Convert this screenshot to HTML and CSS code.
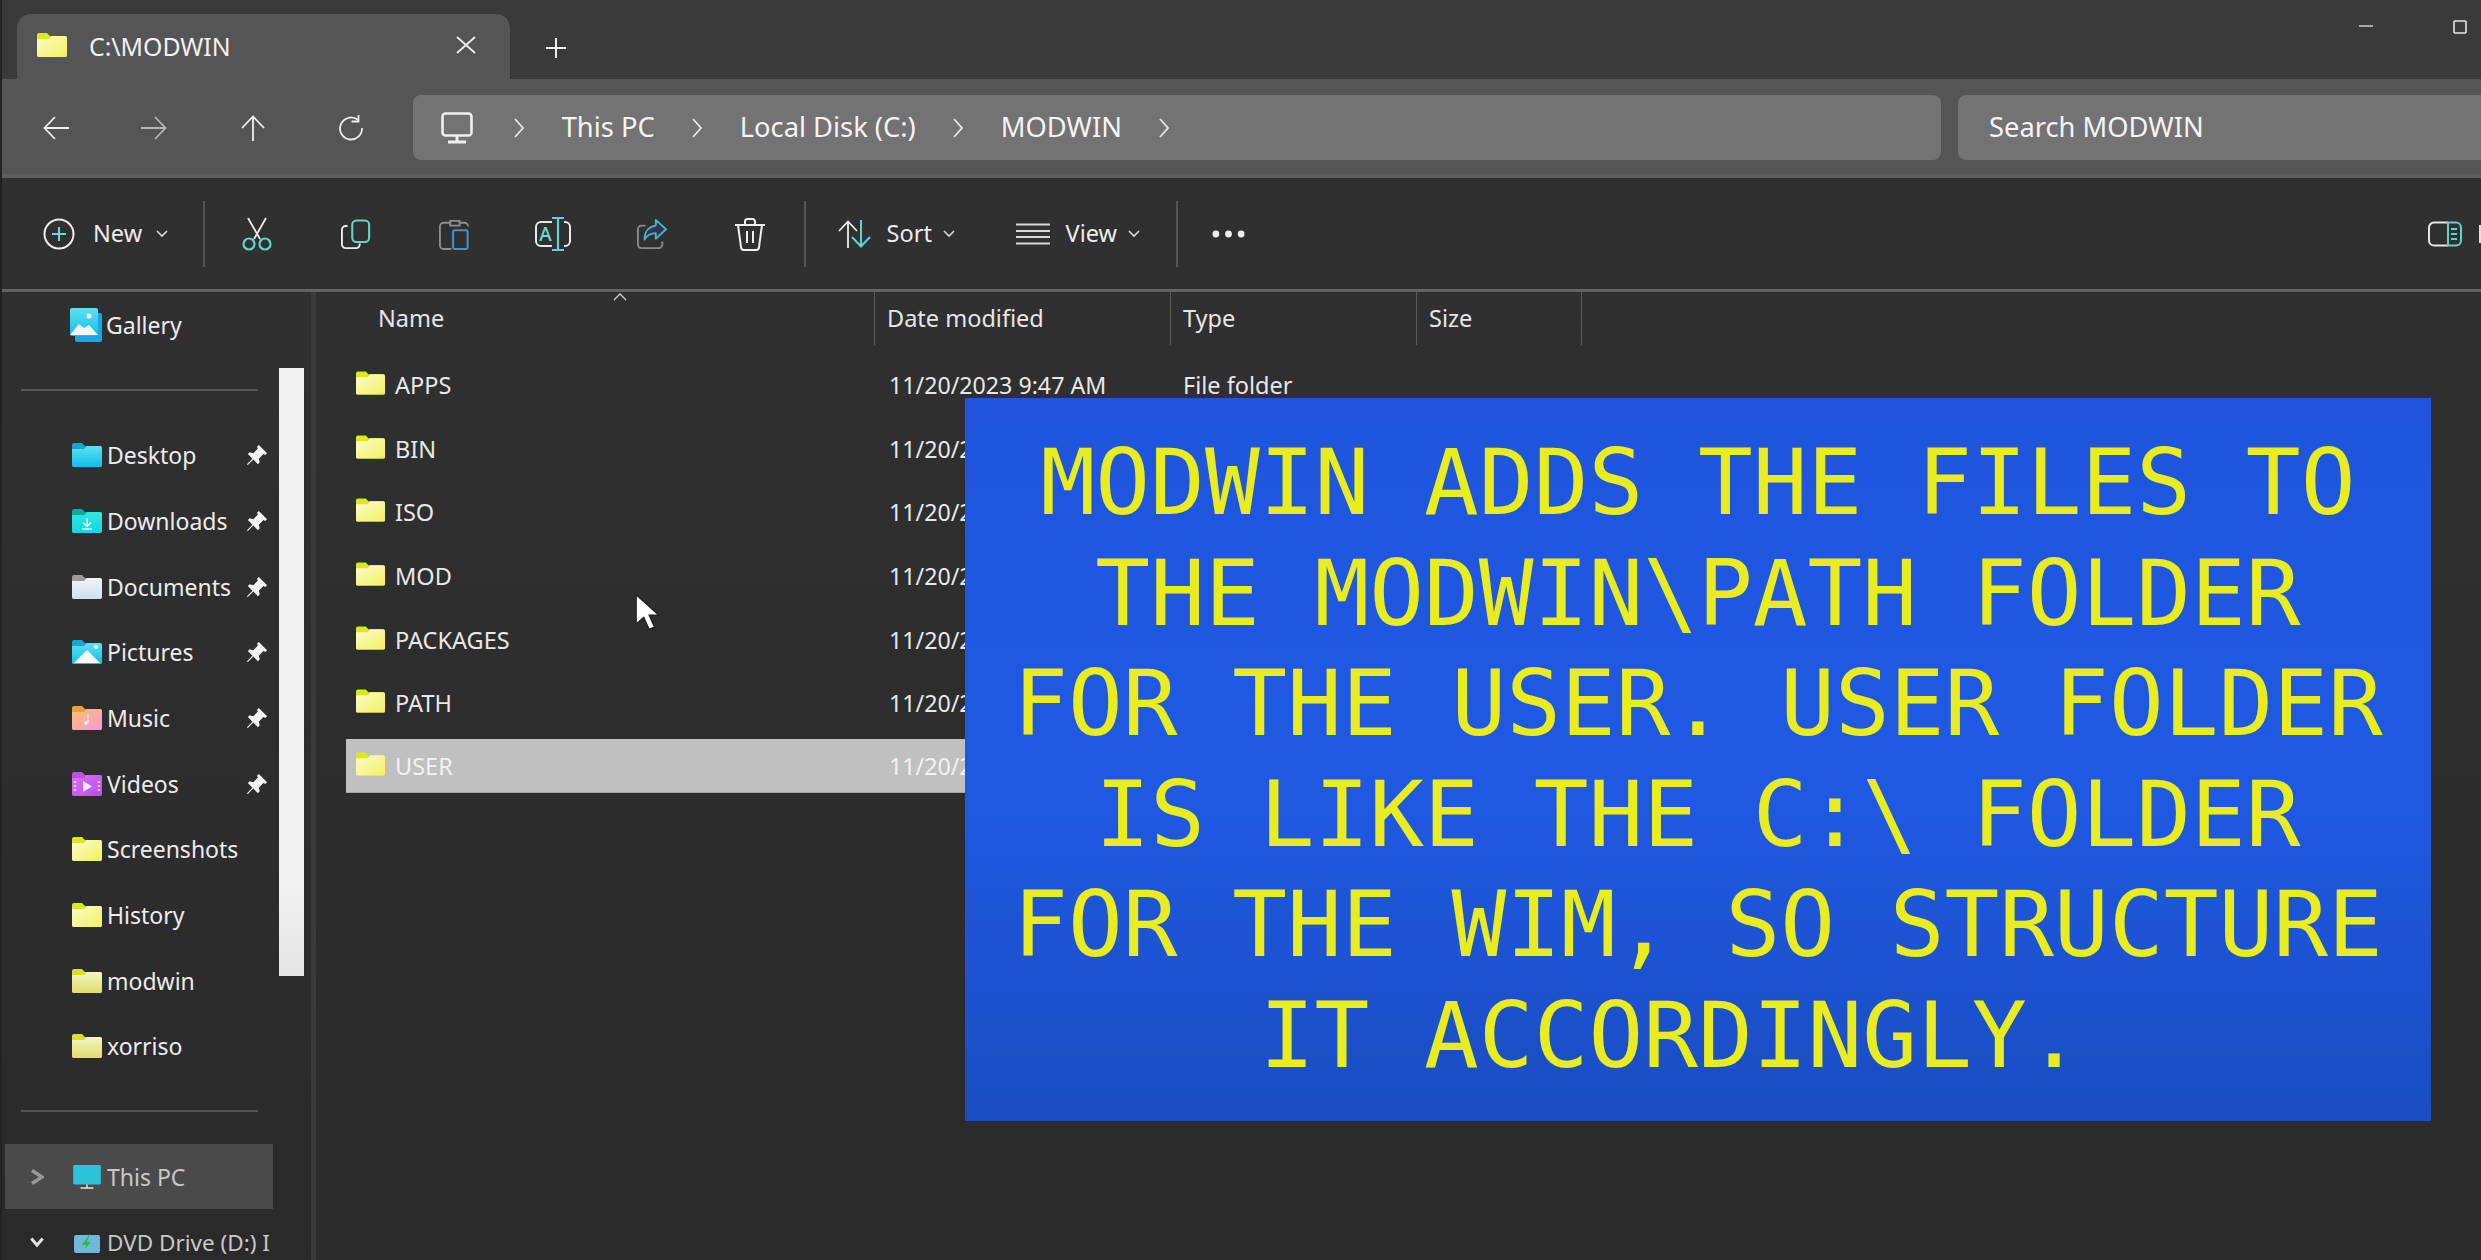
FILE: index.html
```html
<!DOCTYPE html>
<html lang="en">
<head>
<meta charset="utf-8">
<title>C:\MODWIN</title>
<link rel="stylesheet" href="styles.css">
</head>
<body>
<svg class="defs" width="0" height="0" aria-hidden="true">
  <defs>
    <linearGradient id="gy" x1="0" y1="0" x2="1" y2="1"><stop offset="0" stop-color="#fbfbd0"/><stop offset="1" stop-color="#f2f25c"/></linearGradient>
    <linearGradient id="gm" x1="0" y1="0" x2="0" y2="1"><stop offset="0" stop-color="#f4f4c4"/><stop offset="1" stop-color="#dede6c"/></linearGradient>
    <linearGradient id="gc" x1="0" y1="0" x2="0" y2="1"><stop offset="0" stop-color="#5fe0f4"/><stop offset="1" stop-color="#10c0e8"/></linearGradient>
    <linearGradient id="gt" x1="0" y1="0" x2="0" y2="1"><stop offset="0" stop-color="#30e8e0"/><stop offset="1" stop-color="#12d6e0"/></linearGradient>
    <linearGradient id="gw" x1="0" y1="0" x2="0" y2="1"><stop offset="0" stop-color="#f4f4f4"/><stop offset="1" stop-color="#cfe0f0"/></linearGradient>
    <linearGradient id="go" x1="0" y1="0" x2="1" y2="1"><stop offset="0" stop-color="#fbc070"/><stop offset="1" stop-color="#f898d8"/></linearGradient>
    <linearGradient id="gv" x1="0" y1="0" x2="1" y2="1"><stop offset="0" stop-color="#e070f0"/><stop offset="1" stop-color="#b050f0"/></linearGradient>
    <symbol id="folder" viewBox="0 0 30 24"><path d="M0 2a2 2 0 0 1 2-2h8l3 3h15a2 2 0 0 1 2 2v17a2 2 0 0 1-2 2H2a2 2 0 0 1-2-2z" fill="#d6ea1e"/><path d="M0 6h12l3-3h13a2 2 0 0 1 2 2v17a2 2 0 0 1-2 2H2a2 2 0 0 1-2-2z" fill="url(#gy)"/></symbol>
    <symbol id="folder-m" viewBox="0 0 30 24"><path d="M0 2a2 2 0 0 1 2-2h8l3 3h15a2 2 0 0 1 2 2v17a2 2 0 0 1-2 2H2a2 2 0 0 1-2-2z" fill="#d6e030"/><path d="M0 6h12l3-3h13a2 2 0 0 1 2 2v17a2 2 0 0 1-2 2H2a2 2 0 0 1-2-2z" fill="url(#gm)"/></symbol>
    <symbol id="pin" viewBox="0 0 24 24"><path d="M14 1l9 9-2 2-2-1-5 5 1 4-2 2-5-5-6 6-1-1 6-6-5-5 2-2 4 1 5-5-1-2z" fill="#f2f2f2"/></symbol>
    <symbol id="chev" viewBox="0 0 10 20"><path d="M1 1l8 9-8 9" fill="none" stroke="#e8e8e8" stroke-width="1.8"/></symbol>
    <symbol id="down" viewBox="0 0 12 8"><path d="M1 1l5 5 5-5" fill="none" stroke="#d8d8d8" stroke-width="1.6"/></symbol>
  </defs>
</svg>
<div class="window">
  <header class="titlebar">
    <div class="tab">
      <svg class="tab-folder"><use href="#folder"/></svg>
      <span class="tab-title">C:\MODWIN</span>
      <svg class="tab-close" viewBox="0 0 20 18"><path d="M1 1l18 16M19 1L1 17" stroke="#eee" stroke-width="1.8" fill="none"/></svg>
    </div>
    <svg class="tab-plus" viewBox="0 0 20 20"><path d="M10 0v20M0 10h20" stroke="#eee" stroke-width="2" fill="none"/></svg>
    <div class="winctl">
      <svg class="ctl-min" viewBox="0 0 14 12"><path d="M0 6h14" stroke="#aaa" stroke-width="2"/></svg>
      <svg class="ctl-max" viewBox="0 0 14 14"><rect x="1" y="1" width="12" height="12" rx="1" stroke="#e8e8e8" stroke-width="1.6" fill="none"/></svg>
    </div>
  </header>

  <nav class="navbar">
    <div class="navbtns">
      <button class="navbtn"><svg class="nav-ic" viewBox="0 0 26 24"><path d="M26 12H2M12 1L1.500 12 12 23" stroke="#eee" stroke-width="1.800" fill="none"/></svg></button>
      <button class="navbtn"><svg class="nav-ic" viewBox="0 0 26 24"><path d="M0 12h24M14 1l10.500 11L14 23" stroke="#b4b4b4" stroke-width="1.800" fill="none"/></svg></button>
      <button class="navbtn"><svg class="nav-ic" viewBox="0 0 26 26"><path d="M13 26V2M2 13L13 1.500 24 13" stroke="#eee" stroke-width="1.800" fill="none"/></svg></button>
      <button class="navbtn"><svg class="nav-ic" viewBox="0 0 26 26"><path d="M20 5a11 11 0 1 0 4 8" stroke="#eee" stroke-width="1.800" fill="none"/><path d="M20.500 0v6.500h-7" stroke="#eee" stroke-width="1.800" fill="none"/></svg></button>
    </div>
    <div class="address">
      <svg class="monitor" viewBox="0 0 32 32"><rect x="1.500" y="1.500" width="29" height="22" rx="3" stroke="#f0f0f0" stroke-width="2.600" fill="none"/><path d="M16 24v5M7 30h18" stroke="#f0f0f0" stroke-width="3"/></svg>
      <svg class="crumb-chev"><use href="#chev"/></svg><span>This PC</span>
      <svg class="crumb-chev"><use href="#chev"/></svg><span>Local Disk (C:)</span>
      <svg class="crumb-chev"><use href="#chev"/></svg><span>MODWIN</span>
      <svg class="crumb-chev"><use href="#chev"/></svg>
    </div>
    <div class="search">Search MODWIN</div>
  </nav>

  <div class="toolbar">
    <div class="tb-new">
      <svg class="ic-new" viewBox="0 0 32 32"><circle cx="16" cy="16" r="14.500" stroke="#eee" stroke-width="2" fill="none"/><path d="M16 9v14M9 16h14" stroke="#62dccb" stroke-width="2"/></svg>
      <span class="tb-label">New</span>
      <svg class="tb-down"><use href="#down"/></svg>
    </div>
    <i class="tb-div"></i>
    <div class="tb-group">
      <button class="tb-btn"><svg class="ic-tb" viewBox="0 0 30 34"><path d="M6 1l12 21M24 1L12 22" stroke="#eee" stroke-width="1.800" fill="none"/><circle cx="7" cy="27" r="5.500" stroke="#5fd4c8" stroke-width="2.200" fill="none"/><circle cx="23" cy="27" r="5.500" stroke="#5fd4c8" stroke-width="2.200" fill="none"/></svg></button>
      <button class="tb-btn"><svg class="ic-tb" viewBox="0 0 32 32"><path d="M7 7.500H5a4 4 0 0 0-4 4V27a4 4 0 0 0 4 4h11a4 4 0 0 0 4-4v-1" stroke="#eee" stroke-width="2" fill="none"/><rect x="12" y="1.500" width="18" height="23" rx="4.500" stroke="#66d6c8" stroke-width="2.200" fill="none"/></svg></button>
      <button class="tb-btn"><svg class="ic-tb" viewBox="0 0 32 34"><path d="M12 5H5a4 4 0 0 0-4 4v20a4 4 0 0 0 4 4h8M12 3h10v5H12zM22 5h5a4 4 0 0 1 4 4" stroke="#8e8e8e" stroke-width="2" fill="none"/><rect x="15" y="13" width="15.500" height="20" rx="1.500" stroke="#4e8cc4" stroke-width="2.200" fill="none"/></svg></button>
      <button class="tb-btn"><svg class="ic-tb ic-wide" viewBox="0 0 36 36"><path d="M17 6H6a5 5 0 0 0-5 5v14a5 5 0 0 0 5 5h11M29 6h1a5 5 0 0 1 5 5v14a5 5 0 0 1-5 5h-1" stroke="#e8e8e8" stroke-width="2" fill="none"/><path d="M23 2v32M17 2h12M17 34h12" stroke="#5fd4c8" stroke-width="2.200" fill="none"/><text x="10.500" y="25" class="ic-a">A</text></svg></button>
      <button class="tb-btn"><svg class="ic-tb" viewBox="0 0 32 32"><path d="M9 7H5a4 4 0 0 0-4 4v16a4 4 0 0 0 4 4h18a4 4 0 0 0 4-4v-3" stroke="#8a8a8a" stroke-width="2" fill="none"/><path d="M20 1l11 10-11 10v-6c-6 0-9 2-12 7 0-9 5-14 12-15z" fill="#2f3358" stroke="#4cb0c4" stroke-width="2" stroke-linejoin="round"/></svg></button>
      <button class="tb-btn"><svg class="ic-tb ic-trash" viewBox="0 0 32 34"><path d="M1 8h30M11 8V4.500A2.500 2.500 0 0 1 13.500 2h5A2.500 2.500 0 0 1 21 4.500V8M4 8l3 22a3 3 0 0 0 3 3h12a3 3 0 0 0 3-3l3-22M13 14v12M19 14v12" stroke="#eee" stroke-width="2" fill="none"/></svg></button>
    </div>
    <i class="tb-div tb-div-mid"></i>
    <div class="tb-sort">
      <svg class="ic-sort" viewBox="0 0 34 28"><path d="M11 28V2M2 11L11 1.500 20 11" stroke="#eee" stroke-width="1.800" fill="none"/><path d="M24 0v26M15 17l9 9.500 9-9.500" stroke="#5fd4c8" stroke-width="2" fill="none"/></svg>
      <span class="tb-label">Sort</span>
      <svg class="tb-down"><use href="#down"/></svg>
    </div>
    <div class="tb-view">
      <svg class="ic-view" viewBox="0 0 34 22"><path d="M0 1.500h34M0 8h34M0 14h34M0 20.500h34" stroke="#d8d8d8" stroke-width="2.200"/></svg>
      <span class="tb-label">View</span>
      <svg class="tb-down"><use href="#down"/></svg>
    </div>
    <i class="tb-div"></i>
    <svg class="ic-dots" viewBox="0 0 34 8"><circle cx="4" cy="4" r="3.500" fill="#eee"/><circle cx="17" cy="4" r="3.500" fill="#eee"/><circle cx="30" cy="4" r="3.500" fill="#eee"/></svg>
    <svg class="ic-panel" viewBox="0 0 34 26"><path d="M20 1.500H6a5 5 0 0 0-5 5v13a5 5 0 0 0 5 5h14" stroke="#e4e4e4" stroke-width="2" fill="none"/><path d="M20 1.500h8a5 5 0 0 1 5 5v13a5 5 0 0 1-5 5h-8z" stroke="#5fd4c8" stroke-width="2" fill="none"/><path d="M23 8h6M23 13h6M23 18h6" stroke="#5fd4c8" stroke-width="2"/></svg>
    <i class="tb-edge"></i>
  </div>

  <div class="content">
    <aside class="sidebar">
      <div class="side-list">
        <div class="side-row side-gallery">
          <svg class="side-ic gal" viewBox="0 0 32 34"><rect x="5" y="5" width="27" height="29" rx="2" fill="#19a8e6"/><rect x="0" y="0" width="28" height="28" rx="2" fill="url(#gc)"/><path d="M0 27l9-11 5 4 5-3 9 10z" fill="#f6f6f6"/><circle cx="19" cy="8" r="2.500" fill="#f6f6f6"/></svg>
          <span>Gallery</span>
        </div>
        <hr class="side-sep side-sep-a">
        <div class="side-row">
          <svg class="side-ic" viewBox="0 0 30 24"><path d="M0 2a2 2 0 0 1 2-2h8l3 3h15a2 2 0 0 1 2 2v17a2 2 0 0 1-2 2H2a2 2 0 0 1-2-2z" fill="#10a8cc"/><path d="M0 6h12l3-3h13a2 2 0 0 1 2 2v17a2 2 0 0 1-2 2H2a2 2 0 0 1-2-2z" fill="url(#gc)"/></svg>
          <span>Desktop</span><svg class="pin"><use href="#pin"/></svg>
        </div>
        <div class="side-row">
          <svg class="side-ic" viewBox="0 0 30 24"><path d="M0 2a2 2 0 0 1 2-2h8l3 3h15a2 2 0 0 1 2 2v17a2 2 0 0 1-2 2H2a2 2 0 0 1-2-2z" fill="#0ea89c"/><path d="M0 6h12l3-3h13a2 2 0 0 1 2 2v17a2 2 0 0 1-2 2H2a2 2 0 0 1-2-2z" fill="url(#gt)"/><path d="M15 9v8M11 13.500l4 4 4-4M10 20h10" stroke="#e8ffff" stroke-width="1.400" fill="none"/></svg>
          <span>Downloads</span><svg class="pin"><use href="#pin"/></svg>
        </div>
        <div class="side-row">
          <svg class="side-ic" viewBox="0 0 30 24"><path d="M0 2a2 2 0 0 1 2-2h8l3 3h15a2 2 0 0 1 2 2v17a2 2 0 0 1-2 2H2a2 2 0 0 1-2-2z" fill="#9a9a9a"/><path d="M0 6h12l3-3h13a2 2 0 0 1 2 2v17a2 2 0 0 1-2 2H2a2 2 0 0 1-2-2z" fill="url(#gw)"/></svg>
          <span>Documents</span><svg class="pin"><use href="#pin"/></svg>
        </div>
        <div class="side-row">
          <svg class="side-ic" viewBox="0 0 30 24"><path d="M0 2a2 2 0 0 1 2-2h8l3 3h15a2 2 0 0 1 2 2v17a2 2 0 0 1-2 2H2a2 2 0 0 1-2-2z" fill="#10a8cc"/><path d="M0 6h12l3-3h13a2 2 0 0 1 2 2v17a2 2 0 0 1-2 2H2a2 2 0 0 1-2-2z" fill="url(#gc)"/><path d="M2 23l13-13 13 13z" fill="#f8f8f8"/><circle cx="24" cy="7" r="2" fill="#f8f8f8"/></svg>
          <span>Pictures</span><svg class="pin"><use href="#pin"/></svg>
        </div>
        <div class="side-row">
          <svg class="side-ic" viewBox="0 0 30 24"><path d="M0 2a2 2 0 0 1 2-2h8l3 3h15a2 2 0 0 1 2 2v17a2 2 0 0 1-2 2H2a2 2 0 0 1-2-2z" fill="#e8a030"/><path d="M0 6h12l3-3h13a2 2 0 0 1 2 2v17a2 2 0 0 1-2 2H2a2 2 0 0 1-2-2z" fill="url(#go)"/><path d="M16 9v8" stroke="#ffe8f0" stroke-width="1.400"/><circle cx="14" cy="17" r="2" fill="#ffe8f0"/></svg>
          <span>Music</span><svg class="pin"><use href="#pin"/></svg>
        </div>
        <div class="side-row">
          <svg class="side-ic" viewBox="0 0 30 24"><path d="M0 2a2 2 0 0 1 2-2h8l3 3h15a2 2 0 0 1 2 2v17a2 2 0 0 1-2 2H2a2 2 0 0 1-2-2z" fill="#c050e0"/><path d="M0 6h12l3-3h13a2 2 0 0 1 2 2v17a2 2 0 0 1-2 2H2a2 2 0 0 1-2-2z" fill="url(#gv)"/><path d="M11 9l9 5.500-9 5.500z" fill="#f8e8ff"/><path d="M3 9v12M27 9v12" stroke="#f0c0ff" stroke-width="2.500" stroke-dasharray="2 2"/></svg>
          <span>Videos</span><svg class="pin"><use href="#pin"/></svg>
        </div>
        <div class="side-row"><svg class="side-ic"><use href="#folder"/></svg><span>Screenshots</span></div>
        <div class="side-row"><svg class="side-ic"><use href="#folder"/></svg><span>History</span></div>
        <div class="side-row"><svg class="side-ic"><use href="#folder-m"/></svg><span>modwin</span></div>
        <div class="side-row"><svg class="side-ic"><use href="#folder-m"/></svg><span>xorriso</span></div>
        <hr class="side-sep side-sep-b">
        <div class="side-row side-tree side-active">
          <svg class="tree-chev" viewBox="0 0 14 16"><path d="M2 1.500L12 8 2 14.500" stroke="#9a9a9a" stroke-width="3.500" fill="none"/></svg>
          <svg class="side-ic" viewBox="0 0 30 26"><rect x="0" y="0" width="30" height="21" rx="1.500" fill="#2bc4d8"/><path d="M15 21v3M8 25h14" stroke="#e8e8e8" stroke-width="1.600"/></svg>
          <span>This PC</span>
        </div>
        <div class="side-row side-tree">
          <svg class="tree-chev" viewBox="0 0 16 12"><path d="M1.500 2L8 9.500 14.500 2" stroke="#e0e0e0" stroke-width="3.500" fill="none"/></svg>
          <svg class="side-ic" viewBox="0 0 30 24"><rect x="2" y="5" width="26" height="18" rx="2" fill="#70b8d8"/><path d="M15 8l-5 7h4l-1 4 6-7h-4l3-9z" fill="#28c040"/></svg>
          <span class="side-cut">DVD Drive (D:) I</span>
        </div>
      </div>
      <div class="side-scroll"></div>
    </aside>

    <main class="files">
      <div class="file-head">
        <div class="hcell hname">Name<svg class="sort-caret" viewBox="0 0 14 8"><path d="M1 7l6-6 6 6" stroke="#d0d0d0" stroke-width="1.300" fill="none"/></svg></div>
        <div class="hcell">Date modified</div>
        <div class="hcell">Type</div>
        <div class="hcell">Size</div>
      </div>
      <div class="file-list">
        <div class="file-row file-first"><div class="fname"><svg class="file-ic"><use href="#folder"/></svg>APPS</div><div class="fdate">11/20/2023 9:47 AM</div><div class="ftype">File folder</div></div>
        <div class="file-row"><div class="fname"><svg class="file-ic"><use href="#folder"/></svg>BIN</div><div class="fdate">11/20/2023 9:47 AM</div></div>
        <div class="file-row"><div class="fname"><svg class="file-ic"><use href="#folder"/></svg>ISO</div><div class="fdate">11/20/2023 9:47 AM</div></div>
        <div class="file-row"><div class="fname"><svg class="file-ic"><use href="#folder"/></svg>MOD</div><div class="fdate">11/20/2023 9:47 AM</div></div>
        <div class="file-row"><div class="fname"><svg class="file-ic"><use href="#folder"/></svg>PACKAGES</div><div class="fdate">11/20/2023 9:47 AM</div></div>
        <div class="file-row"><div class="fname"><svg class="file-ic"><use href="#folder"/></svg>PATH</div><div class="fdate">11/20/2023 9:47 AM</div></div>
        <div class="file-row file-selected"><div class="fname"><svg class="file-ic"><use href="#folder"/></svg>USER</div><div class="fdate">11/20/2023 9:47 AM</div></div>
      </div>
    </main>
  </div>

  <svg class="cursor" viewBox="0 0 24 34"><path d="M2 1v27l7-6 5 11 5-2-5-11h9z" fill="#fff" stroke="#222" stroke-width="1.200"/></svg>

  <aside class="banner">
    <div>MODWIN ADDS THE FILES TO</div>
    <div>THE MODWIN\PATH FOLDER</div>
    <div>FOR THE USER. USER FOLDER</div>
    <div>IS LIKE THE C:\ FOLDER</div>
    <div>FOR THE WIM, SO STRUCTURE</div>
    <div>IT ACCORDINGLY.&nbsp;</div>
  </aside>
</div>
</body>
</html>
```
FILE: styles.css
```css
* { box-sizing: border-box; }
html, body { margin: 0; padding: 0; background: #2c2c2c; }
body { font-family: "Noto Sans", "Open Sans", sans-serif; color: #ececec; overflow: hidden; }
.defs { position: absolute; }
svg { display: block; flex: none; }
button { all: unset; display: flex; align-items: center; justify-content: center; }

.window { position: relative; width: 2481px; height: 1260px; overflow: hidden; display: flex; flex-direction: column; }
.window::after { content: ""; position: absolute; left: 0; top: 0; bottom: 0; width: 2px; background: #232323; }

/* title bar */
.titlebar { height: 79px; flex: none; background: #3a3a3a; display: flex; align-items: flex-start; padding: 14px 0 0 17px; }
.tab { width: 493px; height: 65px; background: #555; border-radius: 14px 14px 0 0; display: flex; align-items: center; padding: 0 34px 2px 20px; }
.tab-folder { width: 30px; height: 24px; margin-top: -1px; }
.tab-title { margin-left: 22px; font-size: 24.800px; color: #f2f2f2; }
.tab-close { width: 20px; height: 18px; margin-left: auto; margin-top: -2px; }
.tab-plus { width: 20px; height: 20px; margin: 24px 0 0 36px; }
.winctl { margin-left: auto; display: flex; padding-top: 6px; }
.ctl-min { width: 14px; height: 12px; margin-right: 80px; }
.ctl-max { width: 14px; height: 14px; margin-right: 14px; }

/* nav bar */
.navbar { height: 99px; flex: none; background: #555; border-bottom: 4px solid #5e5e5e; display: flex; align-items: flex-start; padding: 16px 0 0 7px; }
.navbtns { display: flex; margin-right: 13px; }
.navbtn { width: 98.3px; height: 65px; }
.nav-ic { width: 26px; height: 26px; }
.address { width: 1528px; height: 65px; background: #737373; border-radius: 8px; display: flex; align-items: center; gap: 37.500px; padding: 0 0 2px 28px; font-size: 27.300px; color: #f4f4f4; }
.monitor { width: 32px; height: 32px; margin: 2px 3.500px 0 0; }
.crumb-chev { width: 10px; height: 20px; margin-top: 2px; }
.search { width: 523px; height: 65px; margin-left: 17px; background: #737373; border-radius: 8px 0 0 8px; display: flex; align-items: center; padding: 0 0 2px 31px; font-size: 27.300px; color: #f4f4f4; }

/* tool bar */
.toolbar { height: 114px; flex: none; background: #303030; border-bottom: 3px solid #636363; display: flex; align-items: center; padding: 0 0 0 43px; font-size: 23.500px; color: #ececec; }
.tb-label { line-height: 1; }
.tb-down { width: 12px; height: 8px; }
.tb-new { width: 160px; display: flex; align-items: center; }
.ic-new { width: 32px; height: 32px; }
.tb-new .tb-label { margin-left: 18px; }
.tb-new .tb-down { margin-left: 14px; }
.tb-div { width: 2px; height: 66px; background: #555; flex: none; }
.tb-group { display: flex; margin-left: 3px; margin-right: 4px; }
.tb-btn { width: 98.6px; height: 40px; }
.ic-tb { width: 30px; height: 34px; }
.ic-wide { width: 36px; height: 36px; }
.ic-trash { width: 32px; }
.ic-a { font: 500 19px "Noto Sans", sans-serif; fill: #6fdccb; text-anchor: middle; }
.tb-sort { display: flex; align-items: center; margin-left: 31px; width: 179px; }
.ic-sort { width: 34px; height: 28px; }
.tb-sort .tb-label { margin-left: 16px; }
.tb-sort .tb-down { margin-left: 11px; }
.tb-view { display: flex; align-items: center; width: 160px; }
.ic-view { width: 34px; height: 22px; }
.tb-view .tb-label { margin-left: 16px; }
.tb-view .tb-down { margin-left: 11px; }
.ic-dots { width: 33px; height: 8px; margin-left: 34px; }
.ic-panel { width: 34px; height: 26px; margin-left: auto; }
.tb-edge { width: 2px; height: 18px; background: #e0e0e0; margin-left: 17px; flex: none; }

/* content */
.content { flex: 1; display: flex; min-height: 0; background: linear-gradient(#303030, #2a2a2a); }
.sidebar { width: 316px; flex: none; display: flex; border-right: 5px solid #3a3a3a; font-size: 23px; }
.side-list { width: 279px; flex: none; }
.side-row { height: 65.67px; margin: 0 6px 0 5px; padding-left: 67px; padding-right: 5px; display: flex; align-items: center; white-space: nowrap; color: #ececec; }
.side-row span { margin-left: 5px; }
.side-ic { width: 30px; height: 24px; }
.gal { width: 32px; height: 34px; margin-left: -2px; }
.side-gallery span { margin-left: 4px; }
.pin { width: 22px; height: 22px; margin-left: auto; }
.side-sep { height: 2px; margin: 0 21px; border: 0; background: #555; }
.side-sep-a { margin-top: 31px; margin-bottom: 32px; }
.side-sep-b { margin-top: 31px; margin-bottom: 31.500px; }
.side-tree { padding-left: 25px; padding-right: 0; }
.tree-chev { width: 14px; height: 16px; margin-right: 28px; }
.side-active { background: #4a4a4a; color: #c8c8c8; }
.side-cut { color: #c8c8c8; font-size: 22.500px; }
.side-scroll { width: 25px; height: 608px; margin-top: 76px; background: linear-gradient(#f2f2f2 85%, #e4e4e4); flex: none; }

/* file list */
.files { flex: 1; min-width: 0; padding-left: 30px; font-size: 23.500px; }
.file-head { display: flex; height: 53px; color: #e6e6e6; }
.hcell { position: relative; border-right: 1px solid #5a5a5a; padding: 0 0 2px 12px; display: flex; align-items: center; width: 246px; }
.hcell:nth-child(1) { width: 529px; padding-left: 32px; }
.hcell:nth-child(2) { width: 296px; }
.hcell:nth-child(3) { width: 246px; }
.hcell:nth-child(4) { width: 165px; }
.sort-caret { position: absolute; left: 267px; top: 1px; width: 14px; height: 8px; }
.file-list { margin-top: 13px; display: flex; flex-direction: column; gap: 9.700px; }
.file-row { height: 54px; width: 1236px; display: flex; align-items: center; color: #e8e8e8; }
.fname { width: 543px; display: flex; align-items: center; padding-left: 10px; }
.file-ic { width: 29px; height: 24px; margin-right: 10px; margin-top: -4px; }
.fdate { width: 76px; overflow: hidden; white-space: nowrap; font-size: 23.200px; }
.file-first .fdate { width: 294px; }
.file-selected { background: #c0c0c0; color: #f2f2f2; border-bottom: 1px solid #a8a8a8; margin-top: -1px; padding-top: 1px; }

/* overlays */
.cursor { position: absolute; left: 634px; top: 593px; width: 26px; height: 38px; }
.banner { position: absolute; left: 965px; top: 398px; width: 1466px; height: 723px; padding-top: 30px; background: linear-gradient(#1f55dd 0%, #1f59e2 55%, #1a4dc2 100%); color: #e9ec1e; font-family: "DejaVu Sans Mono", monospace; font-size: 91px; line-height: 110.600px; text-align: center; white-space: nowrap; }
```
